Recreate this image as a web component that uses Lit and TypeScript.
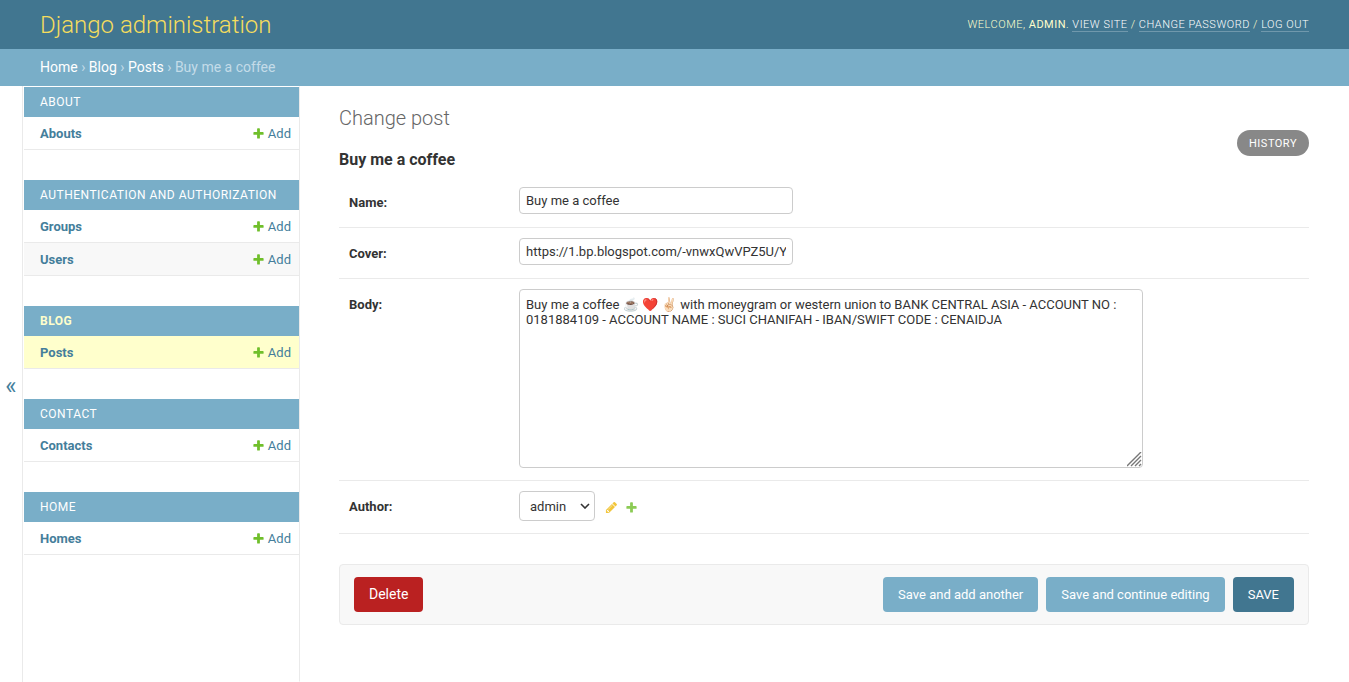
import { LitElement, html, css, svg } from "lit";
import { customElement, property } from "lit/decorators.js";
import { classMap } from "lit/directives/class-map.js";

interface Model {
  name: string;
}

interface App {
  label: string;
  models: Model[];
  current?: boolean;
}

const APPS: App[] = [
  { label: "About", models: [{ name: "Abouts" }] },
  {
    label: "Authentication and Authorization",
    models: [{ name: "Groups" }, { name: "Users" }],
  },
  { label: "Blog", models: [{ name: "Posts" }], current: true },
  { label: "Contact", models: [{ name: "Contacts" }] },
  { label: "Home", models: [{ name: "Homes" }] },
];

const COVER = "https://1.bp.blogspot.com/-vnwxQwVPZ5U/Y";
const BODY =
  "Buy me a coffee ☕ ❤️ ✌🏻 with moneygram or western union to BANK CENTRAL ASIA - ACCOUNT NO : 0181884109 - ACCOUNT NAME : SUCI CHANIFAH - IBAN/SWIFT CODE : CENAIDJA";

const PLUS = svg`<path fill="#70bf2b" d="M1600 796v192q0 40-28 68t-68 28h-416v416q0 40-28 68t-68 28h-192q-40 0-68-28t-28-68v-416h-416q-40 0-68-28t-28-68v-192q0-40 28-68t68-28h416v-416q0-40 28-68t68-28h192q40 0 68 28t28 68v416h416q40 0 68 28t28 68z"/>`;
const PENCIL = svg`<path fill="#efb80b" d="M491 1536l91-91-235-235-91 91v107h128v128h107zm523-928q0-22-22-22-10 0-17 7l-542 542q-7 7-7 17 0 22 22 22 10 0 17-7l542-542q7-7 7-17zm-54-192l416 416-832 832h-416v-416zm683 96q0 53-37 90l-166 166-416-416 166-165q36-38 90-38 53 0 91 38l235 234q37 39 37 91z"/>`;

const icon = (shape: unknown) =>
  html`<svg class="icon" width="13" height="13" viewBox="0 0 1792 1792" aria-hidden="true">${shape}</svg>`;

@customElement("admin-header")
export class AdminHeader extends LitElement {
  static styles = css`
    :host {
      display: block;
    }
    a {
      color: #fff;
      text-decoration: none;
    }
    .header {
      display: flex;
      justify-content: space-between;
      align-items: center;
      padding: 10px 40px;
      background: #417690;
      color: #ffc;
    }
    .site-name {
      margin: 0;
      padding-top: 1px;
      font-size: 24px;
      line-height: 28px;
      font-weight: 300;
    }
    .site-name a {
      color: #f5dd5d;
    }
    .user-tools {
      font-size: 11px;
      line-height: 13px;
      font-weight: 300;
      letter-spacing: 0.5px;
      text-transform: uppercase;
    }
    .user-tools a {
      border-bottom: 1px solid rgba(255, 255, 255, 0.25);
    }
    .breadcrumbs {
      padding: 10px 40px;
      background: #79aec8;
      color: #c4dce8;
      font-size: 14px;
      line-height: 17px;
    }
  `;

  render() {
    return html`
      <header class="header">
        <h1 class="site-name"><a href="#">Django administration</a></h1>
        <div class="user-tools">
          Welcome, <strong>admin</strong>. <a href="#">View site</a> /
          <a href="#">Change password</a> / <a href="#">Log out</a>
        </div>
      </header>
      <nav class="breadcrumbs" aria-label="Breadcrumbs">
        <a href="#">Home</a> › <a href="#">Blog</a> › <a href="#">Posts</a> › Buy me a coffee
      </nav>
    `;
  }
}

@customElement("admin-sidebar")
export class AdminSidebar extends LitElement {
  @property({ attribute: false }) apps: App[] = [];

  static styles = css`
    :host {
      display: flex;
      flex: none;
      font-size: 13px;
    }
    .toggle {
      flex: none;
      width: 23px;
      padding: 4px 0 0;
      border: 0;
      border-right: 1px solid #eaeaea;
      background: #fff;
      color: #447e9b;
      font: 24px/24px Roboto, sans-serif;
      cursor: pointer;
    }
    .sidebar {
      width: 275px;
      border: 1px solid transparent;
      border-right-color: #eaeaea;
    }
    .module {
      width: 100%;
      margin-bottom: 30px;
      border-spacing: 0;
    }
    .caption {
      padding: 8px 16px;
      background: #79aec8;
      text-align: left;
      font-size: 12px;
      line-height: 14px;
      letter-spacing: 0.5px;
      text-transform: uppercase;
    }
    .caption a {
      color: #fff;
    }
    .current .caption a {
      color: #ffc;
      font-weight: 700;
    }
    a {
      color: #447e9b;
      text-decoration: none;
    }
    th,
    td {
      padding: 8px 8px 7px;
      border-bottom: 1px solid #eaeaea;
      line-height: 17px;
    }
    th {
      padding-left: 16px;
      text-align: left;
    }
    .row:nth-child(even) {
      background: #f8f8f8;
    }
    .current .row {
      background: #ffc;
    }
    .add {
      display: flex;
      gap: 3px;
      align-items: center;
      justify-content: flex-end;
    }
    .icon {
      display: block;
    }
  `;

  render() {
    return html`
      <button class="toggle" type="button" aria-label="Toggle navigation">«</button>
      <nav class="sidebar" aria-label="Applications">
        ${this.apps.map(
          (app) => html`
            <table class=${classMap({ module: true, current: !!app.current })}>
              <caption class="caption"><a href="#">${app.label}</a></caption>
              <tbody>
                ${app.models.map(
                  (model) => html`
                    <tr class="row">
                      <th scope="row"><a href="#">${model.name}</a></th>
                      <td><a class="add" href="#">${icon(PLUS)}Add</a></td>
                    </tr>
                  `
                )}
              </tbody>
            </table>
          `
        )}
      </nav>
    `;
  }
}

@customElement("post-form")
export class PostForm extends LitElement {
  static styles = css`
    :host {
      display: block;
      flex: 1;
      min-width: 0;
      padding: 20px 40px 20px 39px;
      font-size: 13px;
    }
    .title {
      margin: 0;
      color: #666;
      font-size: 20px;
      line-height: 24px;
      font-weight: 300;
    }
    .heading {
      display: flex;
      justify-content: space-between;
      align-items: flex-start;
    }
    .object-name {
      margin: 20px 0 8px;
      font-size: 16px;
      line-height: 19px;
      font-weight: 700;
    }
    .history {
      padding: 6px 12px 5px;
      border-radius: 15px;
      background: #888;
      color: #fff;
      font-size: 11px;
      line-height: 15px;
      letter-spacing: 0.5px;
      text-transform: uppercase;
      text-decoration: none;
    }
    .form-row {
      display: flex;
      align-items: flex-start;
      padding: 10px 10px 12px;
      border-bottom: 1px solid #eaeaea;
    }
    .label {
      flex: none;
      width: 170px;
      padding-top: 8px;
      line-height: 15px;
      font-weight: 700;
    }
    .control {
      box-sizing: border-box;
      margin: 0;
      padding: 5px 6px;
      border: 1px solid #ccc;
      border-radius: 4px;
      background: #fff;
      color: #333;
      font: 13px/15px Roboto, sans-serif;
    }
    .text {
      width: 274px;
      margin-bottom: 1px;
    }
    .area {
      display: block;
      width: 624px;
      max-width: 100%;
      height: 179px;
      padding-top: 7px;
    }
    .area::-webkit-resizer {
      background: url("data:image/svg+xml,%3Csvg xmlns='http://www.w3.org/2000/svg' width='15' height='15'%3E%3Cpath d='M0 14L14 0M4 14L14 4M8 14L14 8M12 14L14 12' stroke='%23777' stroke-width='1.4'/%3E%3C/svg%3E")
        no-repeat right bottom;
    }
    .choice {
      appearance: none;
      width: 76px;
      height: 30px;
      margin-right: 3px;
      padding: 5px 10px;
      background: #fff
        url("data:image/svg+xml,%3Csvg xmlns='http://www.w3.org/2000/svg' width='10' height='6'%3E%3Cpath d='M1 1l4 4 4-4' fill='none' stroke='%23333' stroke-width='1.6'/%3E%3C/svg%3E")
        no-repeat right 4px center;
    }
    .related {
      display: flex;
      align-items: center;
      gap: 7px;
    }
    .related a {
      padding-top: 2px;
      opacity: 0.8;
    }
    .icon {
      display: block;
    }
    .submit-row {
      display: flex;
      gap: 8px;
      margin-top: 30px;
      padding: 12px 14px;
      border: 1px solid #eaeaea;
      border-radius: 4px;
      background: #f8f8f8;
    }
    .button {
      padding: 10px 15px;
      border: 0;
      border-radius: 4px;
      background: #79aec8;
      color: #fff;
      font: 13px/15px Roboto, sans-serif;
      text-decoration: none;
      cursor: pointer;
    }
    .primary {
      background: #417690;
      text-transform: uppercase;
    }
    .delete {
      margin-right: auto;
      background: #ba2121;
      font-size: 14px;
    }
  `;

  render() {
    return html`
      <h1 class="title">Change post</h1>
      <div class="heading">
        <h2 class="object-name">Buy me a coffee</h2>
        <a class="history" href="#">History</a>
      </div>
      <form @submit=${(e: Event) => e.preventDefault()}>
        <div class="form-row">
          <label class="label" for="name">Name:</label>
          <input class="control text" id="name" type="text" value="Buy me a coffee" />
        </div>
        <div class="form-row">
          <label class="label" for="cover">Cover:</label>
          <input class="control text" id="cover" type="text" value=${COVER} />
        </div>
        <div class="form-row">
          <label class="label" for="body">Body:</label>
          <textarea class="control area" id="body" spellcheck="false" .value=${BODY}></textarea>
        </div>
        <div class="form-row">
          <label class="label" for="author">Author:</label>
          <div class="related">
            <select class="control choice" id="author">
              <option>admin</option>
            </select>
            <a href="#" aria-label="Change selected user">${icon(PENCIL)}</a>
            <a href="#" aria-label="Add another user">${icon(PLUS)}</a>
          </div>
        </div>
        <div class="submit-row">
          <a class="button delete" href="#">Delete</a>
          <button class="button" type="submit">Save and add another</button>
          <button class="button" type="submit">Save and continue editing</button>
          <button class="button primary" type="submit">Save</button>
        </div>
      </form>
    `;
  }
}

@customElement("app-root")
export class AppRoot extends LitElement {
  static styles = css`
    :host {
      display: flex;
      flex-direction: column;
      min-height: 100vh;
      background: #fff;
      color: #333;
      font-family: Roboto, sans-serif;
      font-size: 13px;
    }
    .main {
      display: flex;
      flex: 1;
    }
  `;

  render() {
    return html`
      <admin-header></admin-header>
      <div class="main">
        <admin-sidebar .apps=${APPS}></admin-sidebar>
        <post-form></post-form>
      </div>
    `;
  }
}
